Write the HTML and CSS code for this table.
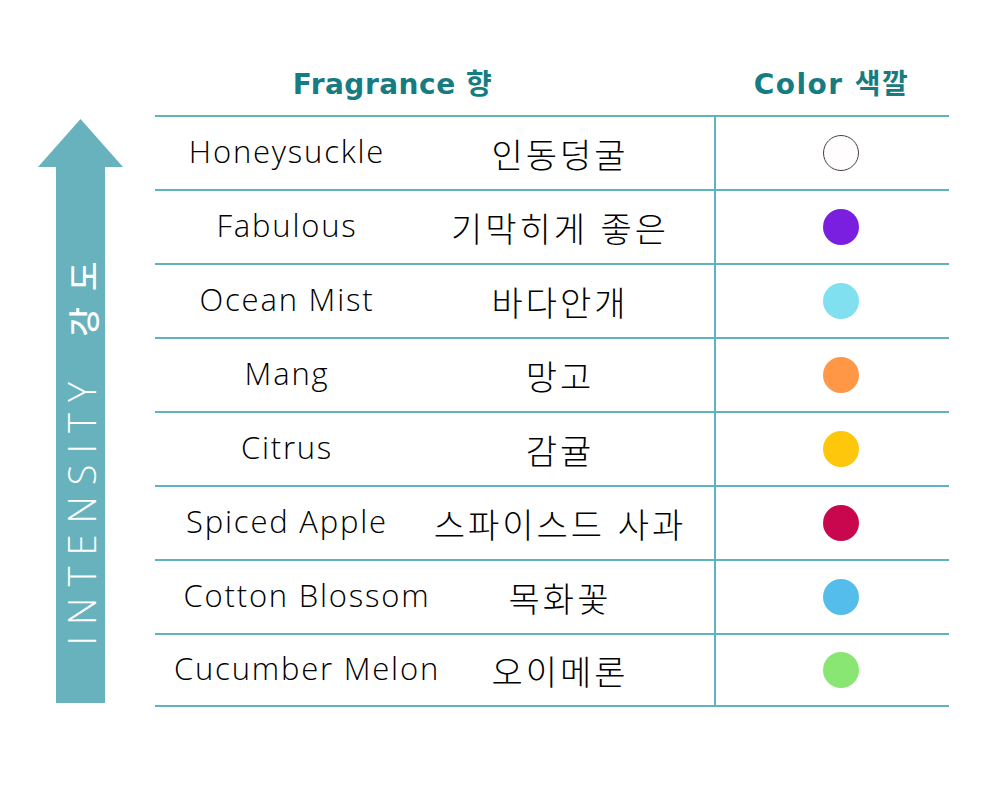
FILE: index.html
```html
<!DOCTYPE html>
<html lang="ko">
<head>
    <meta charset="UTF-8">
    <meta name="viewport" content="width=device-width, initial-scale=1.0">
    <title>Fragrance Intensity Chart</title>
    <link rel="stylesheet" href="styles.css">
</head>
<body>
    <div class="chart">
        <div class="intensity">
            <svg class="arrow-head" width="85" height="48" viewBox="0 0 85 48">
                <polygon points="42.5,0 85,48 0,48" fill="#67b2bd"/>
            </svg>
            <div class="arrow-shaft">
                <span class="arrow-label">INTENSITY<span class="ko">강도</span></span>
            </div>
        </div>

        <div class="table">
            <div class="head">
                <div class="head-fragrance">Fragrance 향</div>
                <div class="head-color">Color 색깔</div>
            </div>

            <div class="row">
                <div class="name"><span class="en">Honeysuckle</span><span class="kr">인동덩굴</span></div>
                <div class="color"><span class="dot white"></span></div>
            </div>
            <div class="row">
                <div class="name"><span class="en">Fabulous</span><span class="kr">기막히게 좋은</span></div>
                <div class="color"><span class="dot purple"></span></div>
            </div>
            <div class="row">
                <div class="name"><span class="en">Ocean Mist</span><span class="kr">바다안개</span></div>
                <div class="color"><span class="dot aqua"></span></div>
            </div>
            <div class="row">
                <div class="name"><span class="en">Mang</span><span class="kr">망고</span></div>
                <div class="color"><span class="dot orange"></span></div>
            </div>
            <div class="row">
                <div class="name"><span class="en">Citrus</span><span class="kr">감귤</span></div>
                <div class="color"><span class="dot yellow"></span></div>
            </div>
            <div class="row">
                <div class="name"><span class="en">Spiced Apple</span><span class="kr">스파이스드 사과</span></div>
                <div class="color"><span class="dot crimson"></span></div>
            </div>
            <div class="row">
                <div class="name"><span class="en wide">Cotton Blossom</span><span class="kr">목화꽃</span></div>
                <div class="color"><span class="dot blue"></span></div>
            </div>
            <div class="row">
                <div class="name"><span class="en wide">Cucumber Melon</span><span class="kr">오이메론</span></div>
                <div class="color"><span class="dot green"></span></div>
            </div>
        </div>
    </div>
</body>
</html>
```

FILE: styles.css
```css
body {
    margin: 0;
    background: #fff;
    font-family: "Open Sans", "Noto Sans CJK KR", sans-serif;
    color: #000;
}
.chart {
    display: flex;
    align-items: flex-start;
    gap: 32px;
    padding-left: 38px;
}

/* intensity arrow */
.intensity {
    margin-top: 119px;
    width: 85px;
    display: flex;
    flex-direction: column;
    align-items: center;
}
.arrow-head {
    display: block;
}
.arrow-shaft {
    width: 49px;
    height: 536px;
    background: #67b2bd;
    display: flex;
    flex-direction: column;
    align-items: center;
    justify-content: flex-end;
    padding-bottom: 58px;
    box-sizing: border-box;
}
.arrow-label {
    writing-mode: vertical-rl;
    text-orientation: sideways;
    transform: rotate(180deg);
    color: #fff;
    font-family: "Open Sans", "Noto Sans CJK KR", sans-serif;
    font-weight: 300;
    font-size: 38px;
    line-height: 1;
    letter-spacing: 11px;
    white-space: nowrap;
}
.arrow-label .ko {
    font-family: "Noto Sans CJK KR", sans-serif;
    font-size: 32px;
    font-weight: 500;
    letter-spacing: 16px;
    margin-top: 34px;
}

/* table */
.table {
    width: 794px;
}
.head {
    display: grid;
    grid-template-columns: 559px 235px;
    height: 115px;
    align-items: end;
    color: #177b82;
    font-family: "DejaVu Sans", "Noto Sans CJK KR", sans-serif;
    font-weight: bold;
    font-size: 28px;
    letter-spacing: 0.5px;
}
.head-fragrance {
    text-align: center;
    padding-right: 84px;
    padding-bottom: 13px;
}
.head-color {
    text-align: center;
    padding-bottom: 13px;
    letter-spacing: 1.5px;
}
.row {
    display: grid;
    grid-template-columns: 559px 235px;
    height: 74px;
    border-top: 2px solid #5db4c0;
    box-sizing: border-box;
}
.row:last-child {
    border-bottom: 2px solid #5db4c0;
}
.name {
    display: grid;
    grid-template-columns: 264px 282px;
    align-items: center;
}
.en {
    display: flex;
    justify-content: center;
    white-space: nowrap;
    font-family: "Open Sans", sans-serif;
    font-weight: 300;
    font-size: 31px;
    letter-spacing: 1.8px;
    margin-top: -4px;
}
.en.wide {
    margin-left: 40px;
}
.kr {
    display: flex;
    justify-content: center;
    white-space: nowrap;
    font-family: "Noto Sans CJK KR", sans-serif;
    font-weight: 300;
    font-size: 34px;
    letter-spacing: 3px;
}
.color {
    border-left: 2px solid #5db4c0;
    display: flex;
    align-items: center;
    justify-content: center;
    padding-left: 17px;
}
.dot {
    width: 36px;
    height: 36px;
    border-radius: 50%;
    box-sizing: border-box;
}
.dot.white { background: #fffdfd; border: 1.5px solid #444; }
.dot.purple { background: #7a1fdf; }
.dot.aqua { background: #80e0ef; }
.dot.orange { background: #ff9747; }
.dot.yellow { background: #ffc70c; }
.dot.crimson { background: #c8074f; }
.dot.blue { background: #54bdeb; }
.dot.green { background: #8ae673; }
```
